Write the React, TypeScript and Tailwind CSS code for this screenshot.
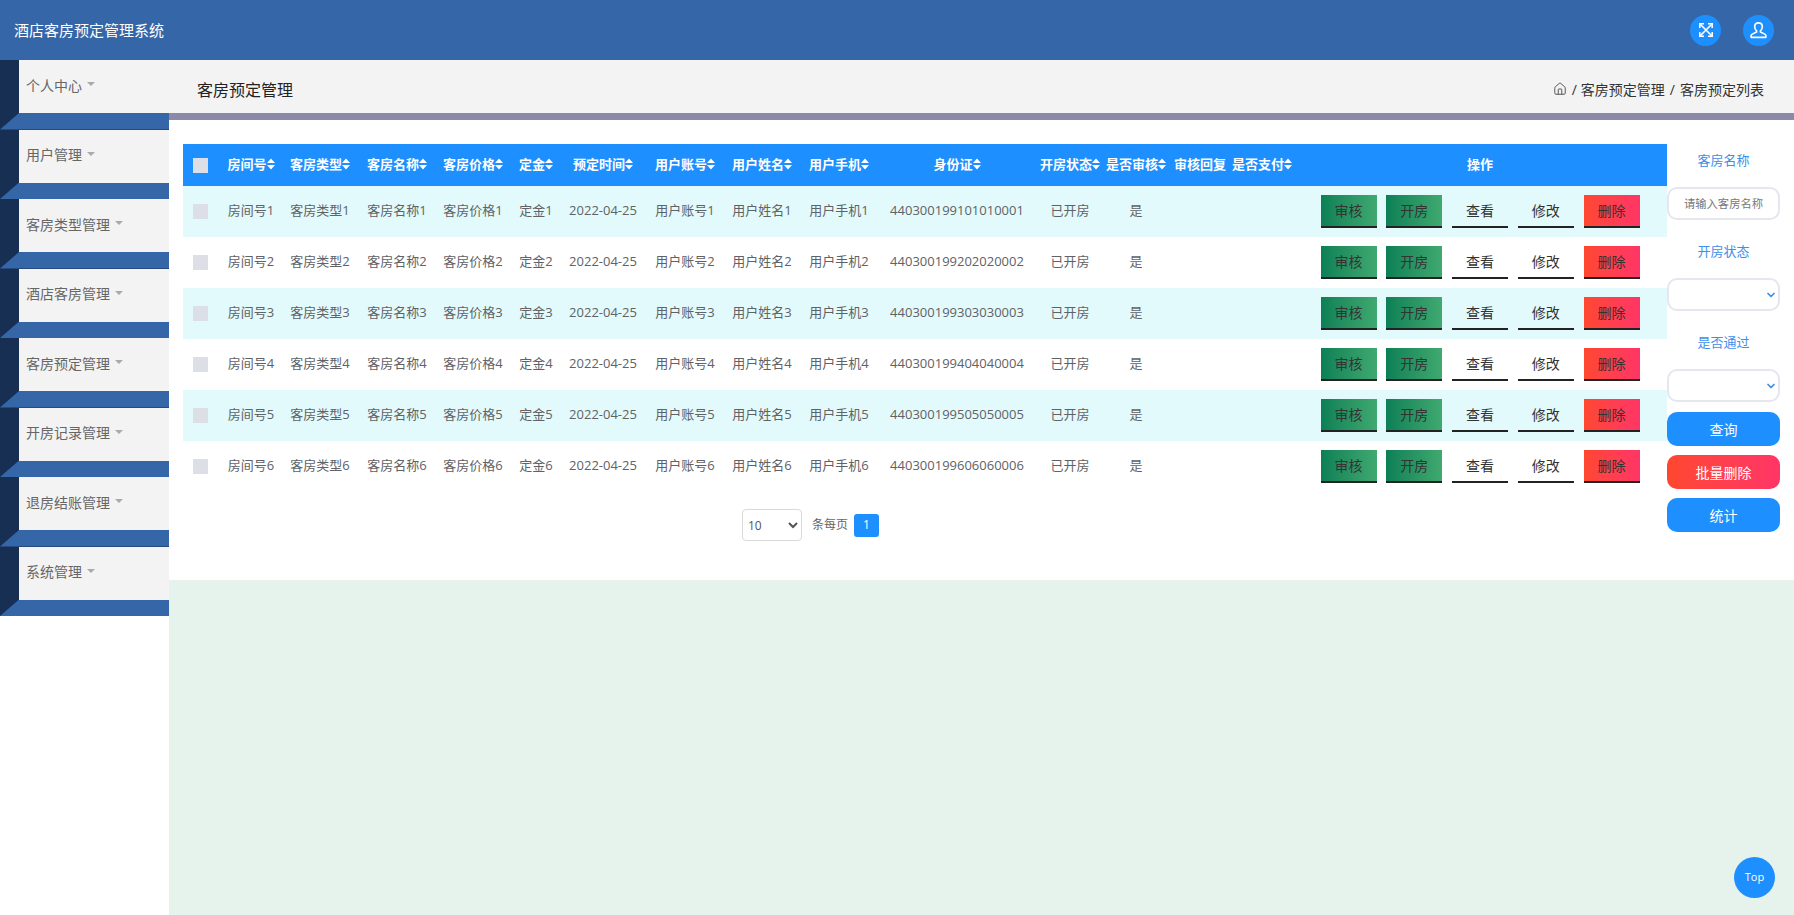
import React from "react";
import { ChevronDown, Home } from "lucide-react";

const font = { fontFamily: '"Open Sans","Noto Sans CJK SC",sans-serif' };
const menus = ["个人中心", "用户管理", "客房类型管理", "酒店客房管理", "客房预定管理", "开房记录管理", "退房结账管理", "系统管理"];
const cols: [string, number, boolean][] = [
  ["", 40, false], ["房间号", 56, true], ["客房类型", 82, true], ["客房名称", 72, true], ["客房价格", 80, true],
  ["定金", 46, true], ["预定时间", 88, true], ["用户账号", 76, true], ["用户姓名", 78, true], ["用户手机", 76, true],
  ["身份证", 160, true], ["开房状态", 66, true], ["是否审核", 66, true], ["审核回复", 62, false], ["是否支付", 62, true], ["操作", 374, false],
];
const rows = [1, 2, 3, 4, 5, 6];
const cell = "p-0 pb-[2px] text-center whitespace-nowrap";

function Sort() {
  return (
    <svg viewBox="0 0 8 12" className="inline-block w-[8px] h-[12px] align-[-1px]" fill="#fff">
      <path d="M4 0.5 8 5H0z" />
      <path d="M4 11.5 0 7h8z" />
    </svg>
  );
}

function Action({ label, kind }: { label: string; kind: "green" | "plain" | "red" }) {
  const cls =
    kind === "green"
      ? "bg-gradient-to-r from-[#0a8056] to-[#3fa970]"
      : kind === "red"
        ? "bg-gradient-to-r from-[#ff472e] to-[#ff3566]"
        : "";
  return (
    <button className={`w-[56px] h-[33px] border-b-2 border-[#222] text-[14px] text-[#333] ${cls}`}>{label}</button>
  );
}

function Label({ children }: { children: React.ReactNode }) {
  return <div className="h-[33px] mb-[10px] flex items-center justify-center text-[13px] text-[#3d8fe8]">{children}</div>;
}

function FilterSelect({ last }: { last?: boolean }) {
  return (
    <div className={`relative w-[113px] h-[33px] ${last ? "mb-[10px]" : "mb-[15px]"}`}>
      <select className="block appearance-none w-full h-full bg-white border-2 border-[#e6e6ee] rounded-[10px] text-[12px]" />
      <ChevronDown size={12} strokeWidth={3.5} color="#3d8fe8" className="absolute right-[3px] top-[11px]" />
    </div>
  );
}

export default function App() {
  return (
    <div className="relative w-[1794px] h-[915px] overflow-hidden bg-white flex flex-col" style={font}>
      <header className="h-[60px] shrink-0 bg-[#3566a8] flex items-center justify-between pl-[14px] pr-[20px]">
        <div className="text-[15px] text-white">酒店客房预定管理系统</div>
        <div className="flex items-center gap-[22px]">
          <div className="w-[31px] h-[31px] rounded-full bg-[#1e8fff] flex items-center justify-center">
            <svg viewBox="0 0 16 16" className="w-[16px] h-[16px]" fill="none" stroke="#fff" strokeWidth="1.6">
              <path d="M2.500 2.500 13.500 13.500M13.500 2.500 2.500 13.500" />
              <path d="M1.800 6V1.800H6M10 1.800h4.200V6M14.200 10v4.200H10M6 14.200H1.800V10" />
            </svg>
          </div>
          <div className="w-[31px] h-[31px] rounded-full bg-[#1e8fff] flex items-center justify-center">
            <svg viewBox="0 0 20 20" className="w-[19px] h-[19px]" fill="none" stroke="#fff" strokeWidth="1.7" strokeLinejoin="round">
              <path d="M10 2c2.500 0 4 1.800 4 4 0 2-.8 3.400-2 4.400v1.200l4.600 2.200c.8.400 1.200 1 1.200 1.800v1.600H2.200v-1.600c0-.8.400-1.400 1.200-1.800L8 11.600v-1.200C6.800 9.400 6 8 6 6c0-2.200 1.500-4 4-4z" />
            </svg>
          </div>
        </div>
      </header>

      <div className="flex-1 flex min-h-0">
        <aside className="w-[169px] shrink-0 bg-white">
          <div className="bg-[#182f54] h-[556px]">
            {menus.map((m) => (
              <div key={m}>
                <div className="ml-[19px] h-[53px] pb-[3px] bg-[#f3f3f3] flex items-center pl-[7px] text-[14px] text-[#666]">
                  <span>{m}</span>
                  <span className="ml-[5px] mt-[-2px] w-0 h-0 border-x-[4px] border-t-[4px] border-x-transparent border-t-[#aaa]" />
                </div>
                <div className="h-[16.5px] bg-[#3566a8] [clip-path:polygon(19px_0,100%_0,100%_100%,0_100%)]" />
              </div>
            ))}
          </div>
        </aside>

        <main className="flex-1 min-w-0 bg-[#e6f3ed]">
          <div className="h-[53px] bg-[#f3f3f3] flex items-center justify-between pl-[28px] pr-[30px] pt-[5px]">
            <div className="text-[16px] text-[#222] pt-[2px]">客房预定管理</div>
            <div className="flex items-center text-[14px] text-[#333]">
              <Home size={14} color="#555" strokeWidth={1.7} className="mr-[5px]" />
              <span>/</span>
              <span className="ml-[4px]">客房预定管理</span>
              <span className="ml-[5px]">/</span>
              <span className="ml-[5px]">客房预定列表</span>
            </div>
          </div>
          <div className="h-[7px] bg-[#8c88a8]" />
          <section className="h-[460px] bg-white pl-[14px] pt-[24px] flex">
            <div className="w-[1484px] shrink-0">
              <table className="w-[1484px] table-fixed border-collapse text-[13px]">
                <colgroup>
                  {cols.map((c, i) => (
                    <col key={i} style={{ width: c[1] }} />
                  ))}
                </colgroup>
                <thead>
                  <tr className="h-[42px] bg-[#1e8fff] text-white">
                    {cols.map((c, i) => (
                      <th key={i} className="p-0 text-center font-bold whitespace-nowrap">
                        {i === 0 ? (
                          <div className="ml-[10px] w-[15px] h-[15px] bg-[#dcdfe6]" />
                        ) : (
                          <>
                            {c[0]}
                            {c[2] && <Sort />}
                          </>
                        )}
                      </th>
                    ))}
                  </tr>
                </thead>
                <tbody>
                  {rows.map((n) => (
                    <tr key={n} className={`h-[51px] text-[#606266] ${n % 2 ? "bg-[#e2fafb]" : "bg-white"}`}>
                      <td className="p-0">
                        <div className="ml-[10px] w-[15px] h-[15px] bg-[#dcdfe6]" />
                      </td>
                      <td className={cell}>房间号{n}</td>
                      <td className={cell}>客房类型{n}</td>
                      <td className={cell}>客房名称{n}</td>
                      <td className={cell}>客房价格{n}</td>
                      <td className={cell}>定金{n}</td>
                      <td className={cell}>2022-04-25</td>
                      <td className={cell}>用户账号{n}</td>
                      <td className={cell}>用户姓名{n}</td>
                      <td className={cell}>用户手机{n}</td>
                      <td className={cell}>{`440300199${n}0${n}0${n}000${n}`}</td>
                      <td className={cell}>已开房</td>
                      <td className={cell}>是</td>
                      <td className="p-0" />
                      <td className="p-0" />
                      <td className="p-0">
                        <div className="flex justify-center gap-[9.75px]">
                          <Action label="审核" kind="green" />
                          <Action label="开房" kind="green" />
                          <Action label="查看" kind="plain" />
                          <Action label="修改" kind="plain" />
                          <Action label="删除" kind="red" />
                        </div>
                      </td>
                    </tr>
                  ))}
                </tbody>
              </table>
              <div className="mt-[17px] ml-[559px] flex items-center text-[12px] text-[#666]">
                <select className="w-[60px] h-[32px] pl-[1px] bg-white border border-[#d9d9d9] rounded-[4px] text-[#555] text-[12px]">
                  <option>10</option>
                </select>
                <span className="ml-[10px]">条每页</span>
                <span className="ml-[6px] w-[25px] h-[23px] rounded-[3px] bg-[#1e8fff] text-white flex items-center justify-center">1</span>
              </div>
            </div>
            <div className="w-[113px] shrink-0">
              <Label>客房名称</Label>
              <input
                placeholder="请输入客房名称"
                className="block w-[113px] h-[33px] mb-[15px] bg-white border-2 border-[#e6e6ee] rounded-[10px] text-center text-[11.3px] placeholder:text-[#777]"
              />
              <Label>开房状态</Label>
              <FilterSelect />
              <Label>是否通过</Label>
              <FilterSelect last />
              <button className="block w-[113px] h-[34px] mb-[9px] rounded-[10px] bg-[#1e8fff] text-white text-[14px]">查询</button>
              <button className="block w-[113px] h-[34px] mb-[9px] rounded-[10px] bg-gradient-to-r from-[#ff472e] to-[#ff3566] text-white text-[14px]">批量删除</button>
              <button className="block w-[113px] h-[34px] rounded-[10px] bg-[#1e8fff] text-white text-[14px]">统计</button>
            </div>
          </section>
        </main>
      </div>

      <div className="absolute left-[1734px] top-[857px] w-[41px] h-[41px] rounded-full bg-[#1e8fff] text-white text-[11px] flex items-center justify-center">
        Top
      </div>
    </div>
  );
}
